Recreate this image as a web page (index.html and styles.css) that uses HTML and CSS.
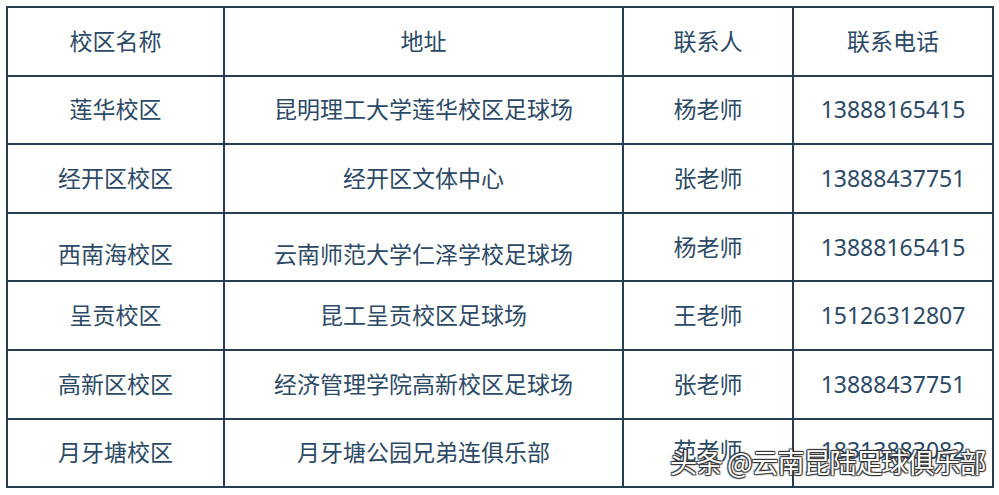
FILE: index.html
```html
<!DOCTYPE html>
<html lang="zh">
<head>
<meta charset="utf-8">
<link rel="stylesheet" href="styles.css">
</head>
<body>
<div class="page">
<table class="campus">
  <colgroup>
    <col class="c1"><col class="c2"><col class="c3"><col class="c4">
  </colgroup>
  <tr><td>校区名称</td><td>地址</td><td>联系人</td><td>联系电话</td></tr>
  <tr><td>莲华校区</td><td>昆明理工大学莲华校区足球场</td><td>杨老师</td><td>13888165415</td></tr>
  <tr><td>经开区校区</td><td>经开区文体中心</td><td>张老师</td><td>13888437751</td></tr>
  <tr><td class="low">西南海校区</td><td class="low">云南师范大学仁泽学校足球场</td><td>杨老师</td><td>13888165415</td></tr>
  <tr><td>呈贡校区</td><td>昆工呈贡校区足球场</td><td>王老师</td><td>15126312807</td></tr>
  <tr><td>高新区校区</td><td>经济管理学院高新校区足球场</td><td>张老师</td><td>13888437751</td></tr>
  <tr><td>月牙塘校区</td><td>月牙塘公园兄弟连俱乐部</td><td class="up">苑老师</td><td class="up">18313883082</td></tr>
</table>
<div class="watermark">头条 @云南昆陆足球俱乐部</div>
</div>
</body>
</html>
```
FILE: styles.css
```css
html, body {
  margin: 0;
  padding: 0;
  background: #ffffff;
}
.page {
  position: relative;
  width: 999px;
  height: 495px;
  padding: 6px 0 0 6px;
  box-sizing: border-box;
  overflow: hidden;
}
.campus {
  border-collapse: collapse;
  table-layout: fixed;
  width: 986px;
  font-family: "Noto Sans", "Noto Sans CJK SC", sans-serif;
  font-size: 23px;
  color: #2c4a66;
}
.c1 { width: 217px; }
.c2 { width: 399px; }
.c3 { width: 170px; }
.c4 { width: 200px; }
.campus td {
  border: 2px solid #263d52;
  height: 68.6px;
  padding: 0;
  text-align: center;
  vertical-align: middle;
  line-height: 1;
  box-sizing: border-box;
}
.campus td.low { padding-top: 14px; }
.campus td.up { padding-bottom: 4px; }
.watermark {
  position: absolute;
  left: 670px;
  top: 444px;
  white-space: nowrap;
  font-family: "Noto Sans CJK SC", sans-serif;
  font-size: 27px;
  line-height: 36px;
  color: #ffffff;
  letter-spacing: -1px;
  text-shadow: 1px 1px 1px #333, -1px -1px 1px #333, 1px -1px 1px #333, -1px 1px 1px #333;
}
```
